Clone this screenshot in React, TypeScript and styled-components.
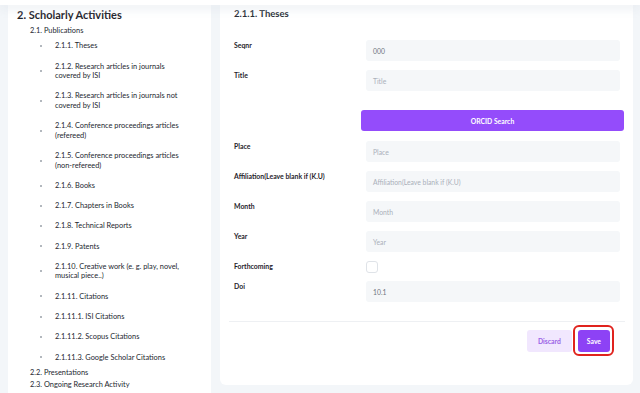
import React from "react";
import styled, { createGlobalStyle } from "styled-components";

const GlobalStyle = createGlobalStyle`
  html, body {
    margin: 0;
    padding: 0;
    height: 393px;
    overflow: hidden;
    background: #f3f6f9;
    font-family: Lato, "Noto Sans", sans-serif;
    color: #252a33;
  }
`;

const TopBar = styled.div`
  height: 5px;
  background: #ffffff;
  box-shadow: 0 3px 10px rgba(220, 226, 234, 0.8);
  position: relative;
  z-index: 2;
`;

const Layout = styled.div`
  display: flex;
  align-items: flex-start;
  gap: 9px;
  padding: 0 7px 0 8px;
`;

const Sidebar = styled.aside`
  width: 203px;
  height: 420px;
  flex-shrink: 0;
  background: #ffffff;
  padding: 0 0 0 9px;
  box-sizing: border-box;
`;

const SideTitle = styled.h2`
  margin: 2px 0 0;
  font-size: 11px;
  line-height: 16px;
  font-weight: 700;
  color: #1f232b;
`;

const Section = styled.div`
  margin-left: 13px;
  font-size: 7.4px;
  line-height: 12px;
  color: #23272f;
`;

const SectionLabel = styled.div<{ $first?: boolean }>`
  line-height: ${(p) => (p.$first ? "10px" : "12px")};
  margin-top: ${(p) => (p.$first ? "3px" : "0")};
`;

const SubList = styled.ul`
  list-style: none;
  margin: 0;
  padding: 0 0 0 10px;
`;

const SubItem = styled.li`
  display: flex;
  align-items: center;
  gap: 13px;
  padding: 5.4px 0;
  line-height: 9.5px;
  white-space: nowrap;
`;

const Dot = styled.span`
  width: 2px;
  height: 2px;
  border-radius: 50%;
  background: #9aa0a8;
  flex-shrink: 0;
`;

const Card = styled.main`
  width: 413px;
  height: 380px;
  flex-shrink: 0;
  background: #ffffff;
  border-radius: 0 0 6px 6px;
  display: flex;
  flex-direction: column;
`;

const CardHeader = styled.h3`
  margin: 0;
  padding: 2px 14px 0;
  font-size: 9.5px;
  line-height: 14px;
  font-weight: 700;
  color: #262b33;
`;

const Form = styled.div`
  display: grid;
  grid-template-columns: 132px 1fr;
  row-gap: 9px;
  padding: 19px 13px 0 14px;
`;

const Label = styled.label`
  font-size: 6.9px;
  font-weight: 700;
  line-height: 10px;
  color: #1f232b;
`;

const Input = styled.div<{ $filled?: boolean }>`
  height: 21px;
  border-radius: 3px;
  background: #f5f7f9;
  display: flex;
  align-items: center;
  padding-left: 7px;
  font-size: 6.8px;
  color: ${(p) => (p.$filled ? "#6f7580" : "#aab0b9")};
`;

const OrcidButton = styled.button`
  grid-column: 2;
  margin: 10px -4px 1px -5px;
  height: 21px;
  border: none;
  border-radius: 3px;
  background: #944cfb;
  color: #ffffff;
  font-family: inherit;
  font-size: 6.8px;
  font-weight: 700;
`;

const Checkbox = styled.span`
  width: 10px;
  height: 10px;
  border: 1px solid #dfe3e8;
  border-radius: 3px;
  background: #ffffff;
`;

const CheckRow = styled.div`
  display: flex;
  align-items: center;
  height: 11px;
`;

const Footer = styled.div`
  margin: 19px 8px 0 9px;
  border-top: 1px solid #eef0f3;
  padding: 8px 15px 0 0;
  display: flex;
  justify-content: flex-end;
  gap: 6px;
`;

const ActionButton = styled.button<{ $primary?: boolean }>`
  position: relative;
  height: 22px;
  padding: 0 ${(p) => (p.$primary ? "9px" : "11px")};
  border: none;
  border-radius: 3px;
  font-family: inherit;
  font-size: 6.8px;
  font-weight: 700;
  background: ${(p) => (p.$primary ? "#8d42f5" : "#f1e7fe")};
  color: ${(p) => (p.$primary ? "#ffffff" : "#9a63e6")};
`;

const Highlight = styled.span`
  position: absolute;
  left: -5px;
  right: -4px;
  top: -5px;
  bottom: -4px;
  border: 2px solid #e0231e;
  border-radius: 6px;
`;

const items: string[][] = [
  ["2.1.1. Theses"],
  ["2.1.2. Research articles in journals", "covered by ISI"],
  ["2.1.3. Research articles in journals not", "covered by ISI"],
  ["2.1.4. Conference proceedings articles", "(refereed)"],
  ["2.1.5. Conference proceedings articles", "(non-refereed)"],
  ["2.1.6. Books"],
  ["2.1.7. Chapters in Books"],
  ["2.1.8. Technical Reports"],
  ["2.1.9. Patents"],
  ["2.1.10. Creative work (e. g. play, novel,", "musical piece..)"],
  ["2.1.11. Citations"],
  ["2.1.11.1. ISI Citations"],
  ["2.1.11.2. Scopus Citations"],
  ["2.1.11.3. Google Scholar Citations"],
];

const fields = [
  { label: "Seqnr", value: "000", filled: true },
  { label: "Title", value: "Title" },
];

const moreFields = [
  { label: "Place", value: "Place" },
  { label: "Affiliation(Leave blank if (K.U)", value: "Affiliation(Leave blank if (K.U)" },
  { label: "Month", value: "Month" },
  { label: "Year", value: "Year" },
];

const Field = ({ label, value, filled }: { label: string; value: string; filled?: boolean }) => (
  <>
    <Label>{label}</Label>
    <Input $filled={filled}>{value}</Input>
  </>
);

export default function App() {
  return (
    <>
      <GlobalStyle />
      <TopBar />
      <Layout>
        <Sidebar>
          <SideTitle>2. Scholarly Activities</SideTitle>
          <Section>
            <SectionLabel $first>2.1. Publications</SectionLabel>
            <SubList>
              {items.map((lines) => (
                <SubItem key={lines[0]}>
                  <Dot />
                  <span>
                    {lines.map((l, i) => (
                      <React.Fragment key={l}>
                        {i > 0 && <br />}
                        {l}
                      </React.Fragment>
                    ))}
                  </span>
                </SubItem>
              ))}
            </SubList>
            <SectionLabel>2.2. Presentations</SectionLabel>
            <SectionLabel>2.3. Ongoing Research Activity</SectionLabel>
            <SectionLabel>2.4. Editorial Activities</SectionLabel>
          </Section>
        </Sidebar>
        <Card>
          <CardHeader>2.1.1. Theses</CardHeader>
          <Form>
            {fields.map((f) => (
              <Field key={f.label} {...f} />
            ))}
            <OrcidButton>ORCID Search</OrcidButton>
            {moreFields.map((f) => (
              <Field key={f.label} {...f} />
            ))}
            <Label>Forthcoming</Label>
            <CheckRow>
              <Checkbox />
            </CheckRow>
            <Field label="Doi" value="10.1" filled />
          </Form>
          <Footer>
            <ActionButton>Discard</ActionButton>
            <ActionButton $primary>
              Save
              <Highlight />
            </ActionButton>
          </Footer>
        </Card>
      </Layout>
    </>
  );
}
